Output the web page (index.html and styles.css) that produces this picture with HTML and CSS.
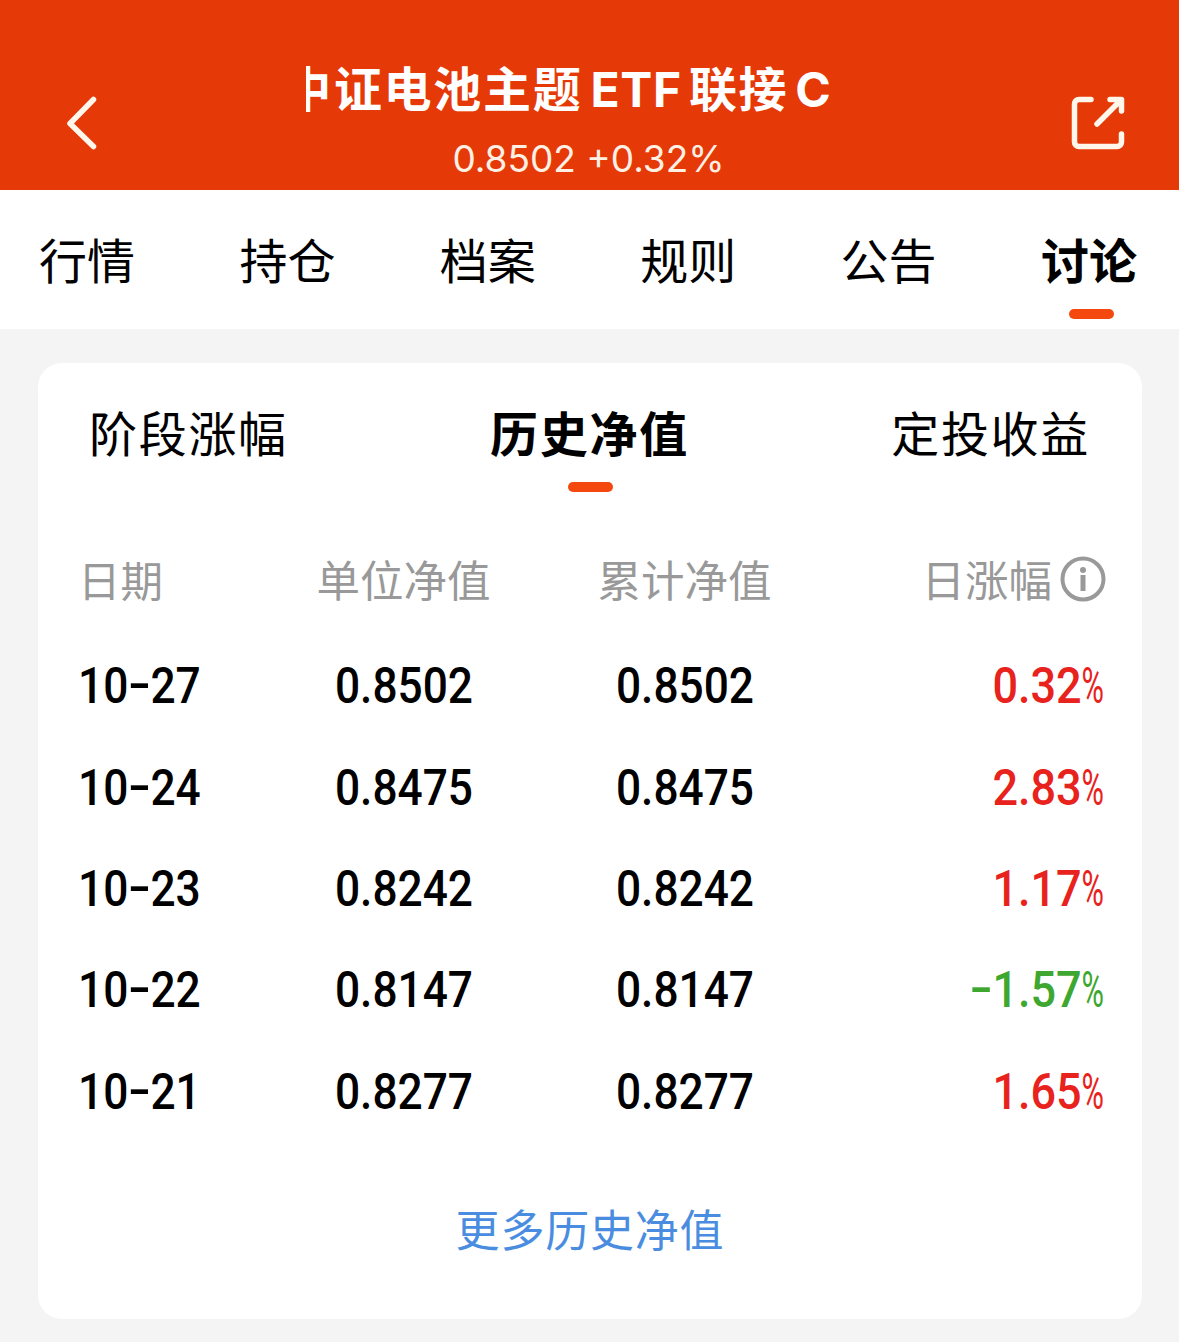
FILE: index.html
```html
<!DOCTYPE html>
<html lang="zh-CN">
<head>
<meta charset="utf-8">
<title>中证电池主题ETF联接C</title>
<link rel="stylesheet" href="styles.css">
</head>
<body>
<header class="header">
  <svg class="back" viewBox="0 0 32 54" width="32" height="54"><path d="M27.500 3.500 4 27.500l23.500 23"/></svg>
  <div class="heading">
    <div class="title"><span><span class="lead">中</span>证电池主题<b class="latin">ETF</b>联接<b class="latin class-c">C</b></span></div>
    <div class="quote">0.8502 +0.32%</div>
  </div>
  <svg class="share" viewBox="0 0 54 54" width="54" height="54"><path d="M20 3.500H8a4.500 4.500 0 0 0-4.500 4.500v38a4.500 4.500 0 0 0 4.500 4.500h38a4.500 4.500 0 0 0 4.500-4.500V38M26 28 50 4M39 3.500h11.500V15"/></svg>
</header>
<nav class="tabs">
  <a class="tab">行情</a><a class="tab">持仓</a><a class="tab">档案</a><a class="tab">规则</a><a class="tab">公告</a><a class="tab active">讨论</a>
</nav>
<main class="card">
  <div class="subtabs">
    <a class="subtab">阶段涨幅</a><a class="subtab active">历史净值</a><a class="subtab">定投收益</a>
  </div>
  <div class="row head">
    <span class="day">日期</span><span class="mid">单位净值</span><span class="mid">累计净值</span>
    <span class="end">日涨幅<svg class="info" viewBox="0 0 46 46" width="46" height="46"><circle cx="23" cy="23" r="20.500"/><circle class="dot" cx="23" cy="14" r="3"/><path d="M23 19v16"/></svg></span>
  </div>
  <div class="row"><span class="num date">10<i class="dash">-</i>27</span><span class="num mid">0.8502</span><span class="num mid">0.8502</span><span class="num end up">0.32<i class="pct">%</i></span></div>
  <div class="row"><span class="num date">10<i class="dash">-</i>24</span><span class="num mid">0.8475</span><span class="num mid">0.8475</span><span class="num end up">2.83<i class="pct">%</i></span></div>
  <div class="row"><span class="num date">10<i class="dash">-</i>23</span><span class="num mid">0.8242</span><span class="num mid">0.8242</span><span class="num end up">1.17<i class="pct">%</i></span></div>
  <div class="row"><span class="num date">10<i class="dash">-</i>22</span><span class="num mid">0.8147</span><span class="num mid">0.8147</span><span class="num end down"><i class="dash">-</i>1.57<i class="pct">%</i></span></div>
  <div class="row"><span class="num date">10<i class="dash">-</i>21</span><span class="num mid">0.8277</span><span class="num mid">0.8277</span><span class="num end up">1.65<i class="pct">%</i></span></div>
  <a class="more">更多历史净值</a>
</main>
</body>
</html>
```
FILE: styles.css
```css
* { box-sizing: border-box; }
body {
  margin: 0;
  height: 1342px;
  background: #f4f4f4;
  color: #000;
  font-family: "Noto Sans CJK SC", sans-serif;
  overflow: hidden;
}
i { font-style: normal; }
svg { display: block; fill: none; stroke-linecap: round; stroke-linejoin: round; flex: none; }

.header {
  height: 190px;
  padding: 0 54px 0 66px;
  display: flex;
  justify-content: space-between;
  background: #e63908;
  color: #fff;
}
.back { margin-top: 96px; stroke: #fff6ec; stroke-width: 5.500; }
.share { margin-top: 96px; stroke: #fff6ec; stroke-width: 5.500; }
.heading { width: 566px; margin-left: 8px; padding-top: 51px; }
.title {
  width: 526px;
  height: 70px;
  display: flex;
  justify-content: flex-end;
  overflow: hidden;
  font-size: 48px;
  font-weight: 700;
  line-height: 70px;
  letter-spacing: 1.700px;
  white-space: nowrap;
}
.lead { margin-right: 1px; }
.latin { font-family: Inter, sans-serif; font-weight: 700; letter-spacing: .700px; margin: 0 7px 0 8px; }
.class-c { margin: 0 0 0 7px; }
.quote {
  height: 50px;
  margin-top: 13px;
  font: 400 37px/50px Inter, sans-serif;
  text-align: center;
  color: #fff0e4;
}

.tabs {
  height: 139px;
  padding: 33px 42px 0 39px;
  display: flex;
  justify-content: space-between;
  background: #fff;
  font-size: 48px;
}
.tab, .subtab { display: flex; flex-direction: column; align-items: center; line-height: 70px; }
.active { font-weight: 700; }
.active::after {
  content: "";
  width: 45px;
  height: 10px;
  border-radius: 5px;
  background: #f5480f;
}
.tab.active::after { margin: 16px 0 0 5px; }

.card {
  width: 1104px;
  height: 956px;
  margin: 34px 0 0 38px;
  border-radius: 24px;
  background: #fff;
}
.subtabs {
  height: 166px;
  padding: 33px 52px 0 51px;
  display: flex;
  justify-content: space-between;
  font-size: 48px;
  letter-spacing: 1.700px;
}
.subtab.active::after { margin: 16px 0 0 2px; }

.row {
  height: 101.400px;
  padding-left: 40px;
  display: grid;
  grid-template-columns: 185px 281px 281px 279px;
  align-items: center;
}
.head { height: 106.500px; padding-bottom: 6px; font-size: 43.500px; line-height: 64px; color: #999; }
.day { font-size: 42.500px; }
.mid { justify-self: center; }
.end { justify-self: end; }
.head .end { display: flex; align-items: center; gap: 8px; margin-right: -2px; }
.info { stroke: #999; stroke-width: 4; }
.info path { stroke-width: 5; stroke-linecap: butt; }
.info .dot { fill: #999; stroke: none; }

.num {
  font: 500 50px/60px Roboto, sans-serif;
  white-space: nowrap;
  transform: scaleX(.885);
}
.date { justify-self: start; transform-origin: left; }
.num.end { transform: scaleX(.9); transform-origin: right; }
.dash { display: inline-block; width: 25px; text-align: center; transform: translateY(-2px) scaleX(1.500); }
.pct { display: inline-block; width: 25px; font-weight: 400; transform: scaleX(.68); transform-origin: left; }
.up { color: #e8221c; }
.down { color: #3ea72f; }

.more {
  display: block;
  margin-top: 54px;
  text-align: center;
  font-size: 44px;
  line-height: 64px;
  letter-spacing: .800px;
  color: #4a8de0;
}
```
